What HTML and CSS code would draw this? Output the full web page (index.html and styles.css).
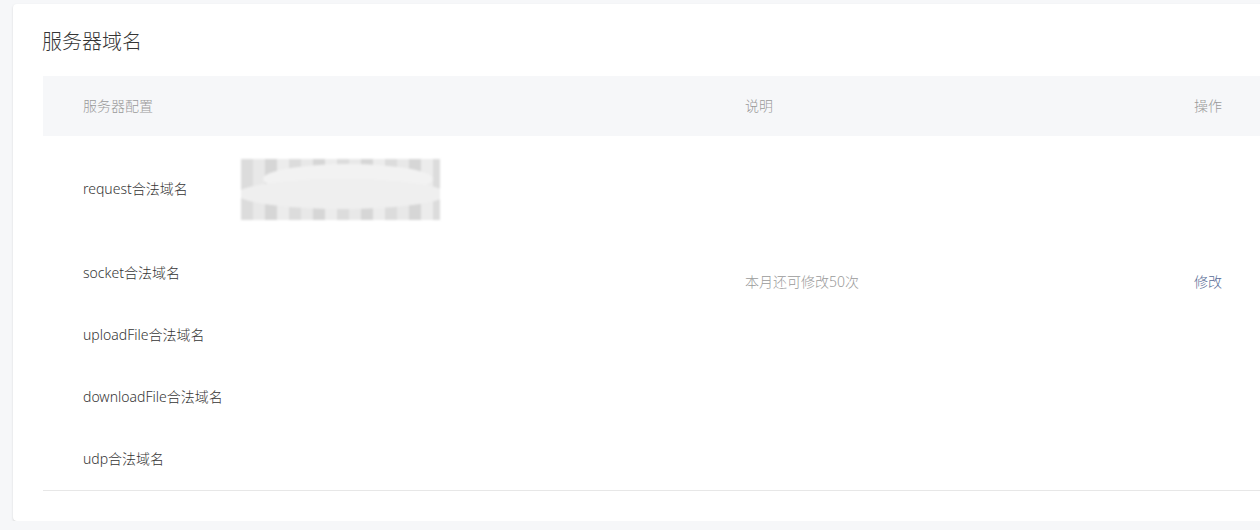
FILE: index.html
```html
<!DOCTYPE html>
<html lang="zh-CN">
<head>
<meta charset="utf-8">
<title>服务器域名</title>
<link rel="stylesheet" href="styles.css">
</head>
<body>
<div class="card">
  <h2 class="title">服务器域名</h2>
  <div class="table">
    <div class="thead">
      <div class="th c1">服务器配置</div>
      <div class="th c2">说明</div>
      <div class="th c3">操作</div>
    </div>
    <div class="tbody">
      <div class="c1 list">
        <div class="row row-first">
          <span class="label">request合法域名</span>
          <div class="masked"><span class="m1"></span><span class="m2"></span></div>
        </div>
        <div class="row"><span class="label">socket合法域名</span></div>
        <div class="row"><span class="label">uploadFile合法域名</span></div>
        <div class="row"><span class="label">downloadFile合法域名</span></div>
        <div class="row"><span class="label">udp合法域名</span></div>
      </div>
      <div class="c2 desc">本月还可修改50次</div>
      <div class="c3 op"><a class="link">修改</a></div>
    </div>
  </div>
</div>
</body>
</html>
```
FILE: styles.css
```css
html, body {
  margin: 0;
  padding: 0;
  background: #f6f7f9;
  overflow: hidden;
  font-family: "Noto Sans", "Noto Sans CJK SC", sans-serif;
  font-weight: 300;
}
.card {
  margin: 4px 0 0 13px;
  width: 1300px;
  background: #fff;
  border-radius: 4px;
  box-shadow: 0 1px 2px rgba(140, 140, 140, 0.35);
  padding: 24px 0 30px 30px;
  box-sizing: border-box;
}
.title {
  margin: 0 0 20px -1px;
  font-size: 20px;
  line-height: 28px;
  font-weight: 300;
  color: #353535;
}
.table {
  font-size: 14px;
  line-height: 20px;
  border-bottom: 1px solid #e7e7e7;
}
.thead, .tbody {
  display: grid;
  grid-template-columns: 702px 449px 1fr;
}
.thead {
  background: #f6f7f9;
  height: 60px;
  align-items: center;
}
.th {
  color: #9a9a9a;
}
.c1 { padding-left: 40px; }
.list { display: flex; flex-direction: column; }
.row {
  height: 62px;
  display: flex;
  align-items: center;
  color: #353535;
}
.row-first { height: 106px; }
.label { width: 158px; flex: none; }
.masked {
  position: relative;
  width: 199px;
  height: 61px;
  background:
    repeating-linear-gradient(90deg, #dcdcdc 0 12px, #e8e8e8 12px 24px, #d6d6d6 24px 36px, #ececec 36px 48px);
  filter: blur(1.2px);
  overflow: hidden;
}
.m1, .m2 {
  position: absolute;
  border-radius: 50%;
}
.m1 { left: 22px; top: 5px; width: 170px; height: 30px; background: #f2f2f2; }
.m2 { left: -4px; top: 20px; width: 210px; height: 30px; background: #efefef; }
.desc {
  color: #9a9a9a;
  padding-top: 136px;
}
.op { padding-top: 136px; }
.link { color: #576b95; text-decoration: none; }
```
